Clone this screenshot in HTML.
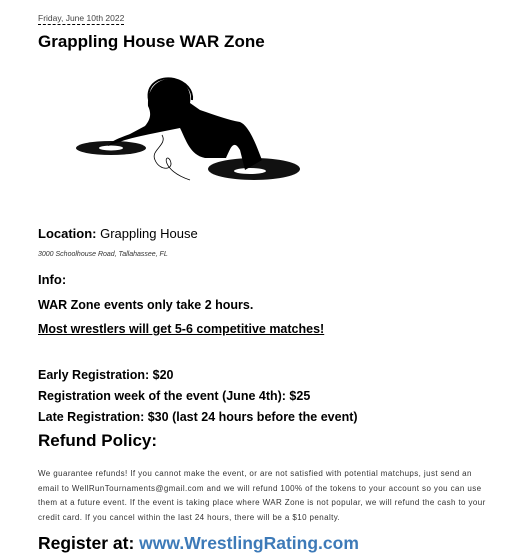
<html><head><style>
body{margin:0;width:530px;height:560px;background:#fff;font-family:"Liberation Sans",sans-serif;color:#000;position:relative;overflow:hidden}
.a{position:absolute;left:38px;white-space:nowrap}
b{font-weight:bold}
</style></head><body>
<div class="a" style="top:13px;font-size:8.5px;color:#444;border-bottom:1px dashed #000;padding-bottom:1px">Friday, June 10th 2022</div>
<div class="a" style="top:32px;font-size:17px;font-weight:bold">Grappling House WAR Zone</div>
<svg style="position:absolute;left:70px;top:72px" width="240" height="120" viewBox="70 72 240 120">
<ellipse cx="111" cy="148" rx="35" ry="7" fill="#111"/>
<ellipse cx="111" cy="148" rx="12" ry="2.5" fill="#fff"/>
<ellipse cx="254" cy="169" rx="46" ry="11" fill="#111"/>
<ellipse cx="250" cy="171" rx="16" ry="3" fill="#fff"/>
<path d="M148 106 C147 88 158 78 172 79 C186 80 192 92 190 103 L200 110 C215 115 228 120 240 122 C250 126 258 150 262 160 L245 170 L240 150 C233 138 230 150 226 158 L205 158 C190 155 186 140 180 128 L160 132 C150 134 140 136 125 140 L108 146 C112 140 120 138 130 134 L145 126 C150 120 152 114 148 106 Z" fill="#000"/>
<path d="M149 100 C146 84 160 76 174 79 C186 82 193 90 192 100" fill="none" stroke="#000" stroke-width="2"/>
<path d="M162 135 C168 145 150 150 155 160 C160 172 175 170 170 160 C165 152 160 170 190 180" fill="none" stroke="#000" stroke-width="0.8"/>
</svg>
<div class="a" style="top:226px;font-size:13px"><b>Location:</b> Grappling House</div>
<div class="a" style="top:251px;font-size:7px;font-style:italic;color:#333">3000 Schoolhouse Road, Tallahassee, FL</div>
<div class="a" style="top:272px;font-size:13px;font-weight:bold">Info:</div>
<div class="a" style="top:298px;font-size:12.5px;font-weight:bold">WAR Zone events only take 2 hours.</div>
<div class="a" style="top:322px;font-size:12.5px;font-weight:bold;text-decoration:underline">Most wrestlers will get 5-6 competitive matches!</div>
<div class="a" style="top:368px;font-size:12.5px;font-weight:bold">Early Registration: $20</div>
<div class="a" style="top:389px;font-size:12.5px;font-weight:bold">Registration week of the event (June 4th): $25</div>
<div class="a" style="top:410px;font-size:12.5px;font-weight:bold">Late Registration: $30 (last 24 hours before the event)</div>
<div class="a" style="top:431px;font-size:17px;font-weight:bold">Refund Policy:</div>
<div class="a" style="top:467px;font-size:8px;line-height:14.6px;color:#333;letter-spacing:0.4px">We guarantee refunds! If you cannot make the event, or are not satisfied with potential matchups, just send an<br>email to WellRunTournaments@gmail.com and we will refund 100% of the tokens to your account so you can use<br>them at a future event. If the event is taking place where WAR Zone is not popular, we will refund the cash to your<br>credit card. If you cancel within the last 24 hours, there will be a $10 penalty.</div>
<div class="a" style="top:533px;font-size:17.5px;font-weight:bold">Register at: <span style="color:#3d7ab8">www.WrestlingRating.com</span></div>
</body></html>
